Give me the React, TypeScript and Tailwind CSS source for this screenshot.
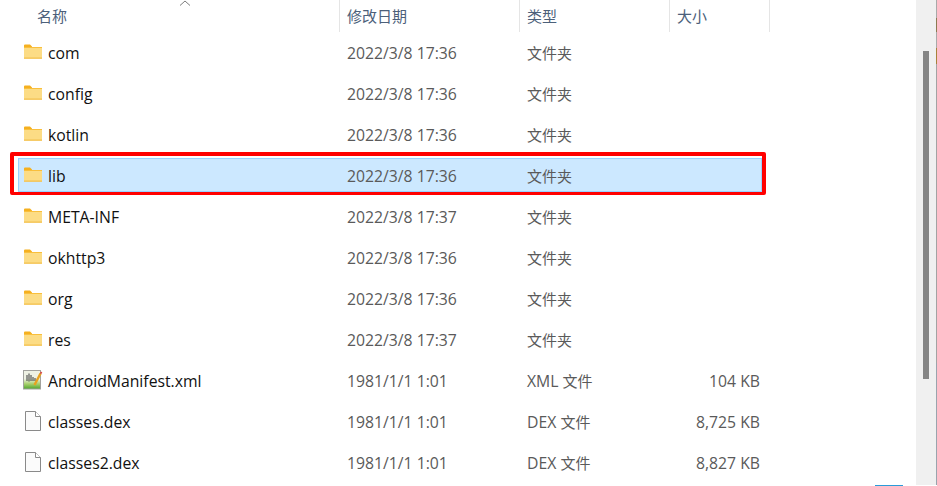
const font = '[font-family:"Open_Sans","Noto_Sans_CJK_SC",sans-serif]';

type Kind = 'folder' | 'xml' | 'file';

const rows: { name: string; date: string; ext?: string; type: string; size?: string; kind: Kind; selected?: boolean }[] = [
  { name: 'com', date: '2022/3/8 17:36', type: '文件夹', kind: 'folder' },
  { name: 'config', date: '2022/3/8 17:36', type: '文件夹', kind: 'folder' },
  { name: 'kotlin', date: '2022/3/8 17:36', type: '文件夹', kind: 'folder' },
  { name: 'lib', date: '2022/3/8 17:36', type: '文件夹', kind: 'folder', selected: true },
  { name: 'META-INF', date: '2022/3/8 17:37', type: '文件夹', kind: 'folder' },
  { name: 'okhttp3', date: '2022/3/8 17:36', type: '文件夹', kind: 'folder' },
  { name: 'org', date: '2022/3/8 17:36', type: '文件夹', kind: 'folder' },
  { name: 'res', date: '2022/3/8 17:37', type: '文件夹', kind: 'folder' },
  { name: 'AndroidManifest.xml', date: '1981/1/1 1:01', ext: 'XML', type: '文件', size: '104 KB', kind: 'xml' },
  { name: 'classes.dex', date: '1981/1/1 1:01', ext: 'DEX', type: '文件', size: '8,725 KB', kind: 'file' },
  { name: 'classes2.dex', date: '1981/1/1 1:01', ext: 'DEX', type: '文件', size: '8,827 KB', kind: 'file' },
];

function FolderIcon() {
  return (
    <svg width="18" height="15" viewBox="0 0 18 15" className="block">
      <path d="M0 1.5A1 1 0 0 1 1 .5h5l2 2v2H0z" fill="#f5b01f" />
      <path d="M0 3h18v11.5H0z" fill="#f9bf3c" />
      <path d="M0 4h18v10.5H0z" fill="#fcdc85" />
      <path d="M0 13.6h18v.9H0z" fill="#f0b93f" />
    </svg>
  );
}

function XmlIcon() {
  return (
    <svg width="20" height="20" viewBox="0 0 20 20" className="block">
      <defs>
        <linearGradient id="xml-fill" x1="0" y1="0" x2="0" y2="1">
          <stop offset="0.45" stopColor="#eef1e4" />
          <stop offset="0.72" stopColor="#a9d06e" />
          <stop offset="1" stopColor="#4fa52c" />
        </linearGradient>
      </defs>
      <rect x="0.5" y="0.5" width="17" height="18.5" fill="url(#xml-fill)" stroke="#a2a29e" />
      <path d="M4 5v6M6 3.5v8M8 5v6M10 7v4M12 8v3" stroke="#3a3a3a" strokeWidth="1" />
      <path d="M11.5 15 17.5 3.5" stroke="#e8a21f" strokeWidth="2.4" />
      <path d="M17.2 2.4 18.8 3.3" stroke="#d8504a" strokeWidth="2.2" />
    </svg>
  );
}

function FileIcon() {
  return (
    <svg width="16" height="20" viewBox="0 0 16 20" className="block">
      <path d="M.5.5h10l5 5v14H.5z" fill="#fbfbfb" stroke="#8a8a8a" />
      <path d="M10.5.5v5h5" fill="#fff" stroke="#8a8a8a" />
    </svg>
  );
}

function RowIcon({ kind }: { kind: Kind }) {
  return (
    <div className="flex w-[24px] shrink-0 justify-center -mt-[5px]">
      {kind === 'folder' && <FolderIcon />}
      {kind === 'xml' && <XmlIcon />}
      {kind === 'file' && <FileIcon />}
    </div>
  );
}

const strip = [
  { h: 'h-[18px]', c: 'bg-[#a9a9a9]' },
  { h: 'h-[14px]', c: 'bg-[#8c7a52]' },
  { h: 'h-[16px]', c: 'bg-[#a9a9a9]' },
  { h: 'h-[16px]', c: 'bg-[#a8823c]' },
  { h: 'h-[300px]', c: 'bg-[#a3a3a3]' },
  { h: 'h-[122px]', c: 'bg-[#9aa4ad]' },
];

export default function App() {
  return (
    <div className={`${font} flex h-[486px] w-[937px] flex-col overflow-hidden bg-white`}>
      <div className="flex min-h-0 flex-1">
        <main className="relative w-[916px] shrink-0">
          {/* Header */}
          <div className="ml-[18px] grid h-[32px] w-[752px] grid-cols-[321px_180px_150px_100px_1px] text-[15px] text-[#4c607a]">
            <div className="relative flex items-center pl-[19px]">
              名称
              <svg width="12" height="6" viewBox="0 0 12 6" className="absolute left-[161px] top-0">
                <path d="M1 5.5 6 1l5 4.5" fill="none" stroke="#7d7d7d" strokeWidth="1" />
              </svg>
            </div>
            <div className="flex items-center border-l border-[#e5e5e5] pl-[7px]">修改日期</div>
            <div className="flex items-center border-l border-[#e5e5e5] pl-[7px]">类型</div>
            <div className="flex items-center border-l border-[#e5e5e5] pl-[7px]">大小</div>
            <div className="border-l border-[#e5e5e5]" />
          </div>

          {/* Rows */}
          <div className="ml-[18px] mt-[3px] flex w-[744px] flex-col gap-[7px]">
            {rows.map((row) => (
              <div
                key={row.name}
                className={`grid h-[34px] grid-cols-[321px_180px_150px_93px] items-center pt-[4px] text-[15.75px] ${
                  row.selected ? 'bg-[#cce8ff] shadow-[inset_0_0_0_1px_#99d1ff]' : ''
                }`}
              >
                <div className="flex items-center pl-[3px] text-[#111111]">
                  <RowIcon kind={row.kind} />
                  <span className="ml-[3px]">{row.name}</span>
                </div>
                <div className="pl-[8px] text-[#5a5a5a]">{row.date}</div>
                <div className="pl-[8px] text-[#5a5a5a]">
                  {row.ext && <span>{row.ext} </span>}
                  <span className="text-[15px]">{row.type}</span>
                </div>
                <div className="pr-[2px] text-right text-[#5a5a5a]">{row.size}</div>
              </div>
            ))}
          </div>

          {/* Red annotation box */}
          <div className="absolute left-[10px] top-[152px] h-[43px] w-[756px] rounded-[2px] border-[4px] border-b-[3px] border-[#ff0000]" />
        </main>

        {/* Scrollbar */}
        <aside className="w-[20px] shrink-0 bg-[#f0f0f0] pl-[7px] pt-[51px]">
          <div className="h-[328px] w-[6px] bg-[#858585]" />
        </aside>

        {/* Edge of what lies behind the window */}
        <div className="flex w-px shrink-0 flex-col">
          {strip.map((s, i) => (
            <div key={i} className={`${s.h} ${s.c}`} />
          ))}
        </div>
      </div>
      <div className="h-px shrink-0">
        <div className="ml-[875px] h-px w-[28px] bg-[#2b9bd8]" />
      </div>
    </div>
  );
}
